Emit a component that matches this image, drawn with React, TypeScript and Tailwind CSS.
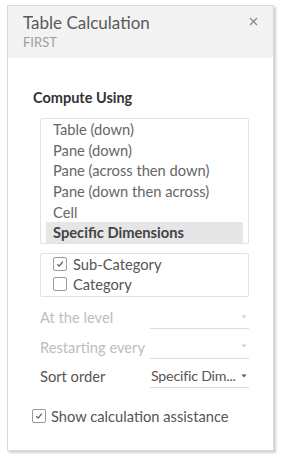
import React from "react";

const items = [
  "Table (down)",
  "Pane (down)",
  "Pane (across then down)",
  "Pane (down then across)",
  "Cell",
  "Specific Dimensions",
];

function Check({ checked }: { checked: boolean }) {
  return (
    <span className="flex h-[14px] w-[14px] shrink-0 items-center justify-center rounded-[2px] border border-[#9a9a9a] bg-white">
      {checked && (
        <svg width="8" height="8" viewBox="0 0 8 8">
          <path d="M1.2 4.2 L3.2 6.2 L6.8 1.6" fill="none" stroke="#555" strokeWidth="1.1" />
        </svg>
      )}
    </span>
  );
}

function Caret({ light }: { light?: boolean }) {
  return (
    <svg width="6" height="4" viewBox="0 0 6 4" className="ml-auto shrink-0">
      <path d="M0.5 0.5 L5.5 0.5 L3 3.5 Z" fill={light ? "#cfcfcf" : "#555"} />
    </svg>
  );
}

function FieldRow({ label, value, disabled }: { label: string; value?: string; disabled?: boolean }) {
  return (
    <div className="flex h-[29.5px] items-center">
      <span className={`w-[110px] text-[14.7px] ${disabled ? "text-[#bdbdbd]" : "text-[#555]"}`}>{label}</span>
      <div className="flex h-[24px] w-[99px] items-center border-b border-[#dcdcdc] pl-[1px] pr-[2px]">
        <span className="whitespace-nowrap text-[14.2px] tracking-[-0.2px] text-[#555]">{value}</span>
        <Caret light={disabled} />
      </div>
    </div>
  );
}

export default function App() {
  return (
    <div className="h-[461px] w-[282px] bg-white pl-[7px] pt-[5px]" style={{ fontFamily: "Lato, 'Open Sans', sans-serif" }}>
      <div className="flex h-[446px] w-[267px] flex-col border border-[#d9d9d9] bg-white shadow-[2px_2px_2px_rgba(0,0,0,0.18)]">
        <div className="relative h-[52px] bg-[#f3f3f3] pl-[15px] pt-[6px]">
          <div className="text-[17px] leading-[21px] text-[#595959]">Table Calculation</div>
          <div className="mt-[1px] text-[13px] leading-[16px] text-[#a0a0a0]">FIRST</div>
          <svg width="9" height="9" viewBox="0 0 9 9" className="absolute right-[15px] top-[11px]">
            <path d="M1 1 L8 8 M8 1 L1 8" stroke="#8a8a8a" strokeWidth="1.3" />
          </svg>
        </div>

        <div className="flex flex-col pl-[25px]">
          <div className="mt-[31px] text-[14.5px] font-bold leading-[18px] text-[#333]">Compute Using</div>

          <div className="ml-[7px] mt-[11px] w-[209px] rounded-[2px] border border-[#e2e2e2] px-[5px]">
            {items.map((it, i) => (
              <div
                key={it}
                className={`flex h-[20.6px] items-center pl-[7px] text-[14.7px] ${
                  i === items.length - 1 ? "bg-[#e6e6e6] font-bold text-[#444]" : "text-[#666]"
                }`}
              >
                {it}
              </div>
            ))}
          </div>

          <div className="ml-[7px] mt-[9px] w-[209px] rounded-[2px] border border-[#e2e2e2] px-[12px] pb-[1px]">
            <div className="flex h-[20.5px] items-center gap-[6px] text-[14.7px] text-[#555]">
              <Check checked />
              Sub-Category
            </div>
            <div className="flex h-[20.5px] items-center gap-[6px] text-[14.7px] text-[#555]">
              <Check checked={false} />
              Category
            </div>
          </div>

          <div className="ml-[7px] mt-[6px] flex flex-col">
            <FieldRow label="At the level" disabled />
            <FieldRow label="Restarting every" disabled />
            <FieldRow label="Sort order" value="Specific Dim..." />
          </div>

          <div className="ml-[-1px] mt-[14px] flex items-center gap-[5px] text-[14.7px] text-[#555]">
            <Check checked />
            Show calculation assistance
          </div>
        </div>
      </div>
    </div>
  );
}
